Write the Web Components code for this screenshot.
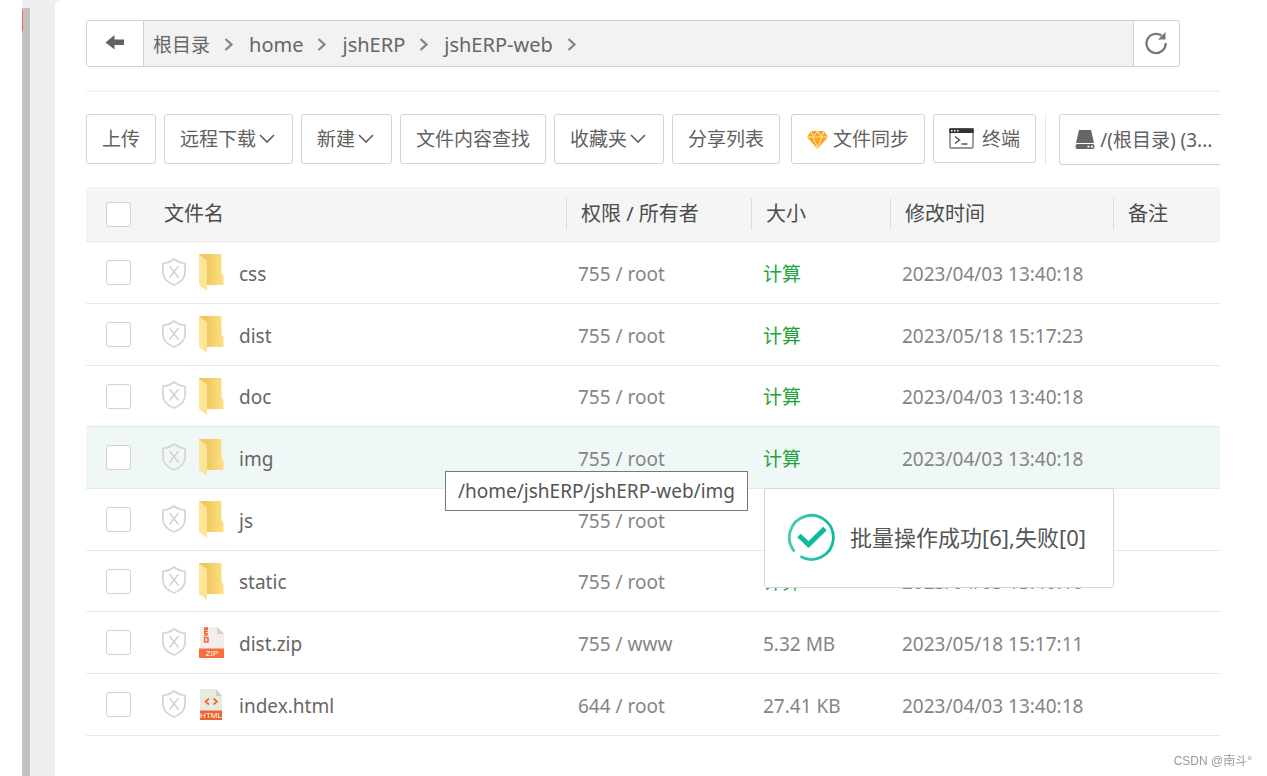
<!DOCTYPE html>
<html lang="zh-CN">
<head>
<meta charset="utf-8">
<title>文件管理</title>
<style>
  html, body { margin: 0; height: 100%; }
  body {
    font-family: "Noto Sans", "Noto Sans CJK SC", sans-serif;
    font-size: 19px;
    line-height: 28px;
    color: #666;
    background: #fff;
    overflow: hidden;
  }
</style>
</head>
<body>
<app-shell>
  <path-bar path="根目录,home,jshERP,jshERP-web"></path-bar>
  <tool-bar>
    <tool-button>上传</tool-button>
    <tool-button menu>远程下载</tool-button>
    <tool-button menu>新建</tool-button>
    <tool-button>文件内容查找</tool-button>
    <tool-button menu>收藏夹</tool-button>
    <tool-button>分享列表</tool-button>
    <tool-button class="sync" icon="diamond">文件同步</tool-button>
    <tool-button icon="terminal">终端</tool-button>
    <tool-button class="disk" icon="disk">/(根目录) (3...</tool-button>
  </tool-bar>
  <file-table>
    <path-tip>/home/jshERP/jshERP-web/img</path-tip>
    <toast-message>批量操作成功[6],失败[0]</toast-message>
  </file-table>
  <page-mark slot="mark">CSDN @南斗°</page-mark>
</app-shell>

<script>
const ICONS = {
  back: `<svg width="20" height="18" viewBox="0 0 20 18"><path fill="#626262" d="M.500 7.500 9.500 0V4.500H19v5.500H9.500V14.500z"/></svg>`,
  next: `<svg width="10" height="14" viewBox="0 0 10 14"><path fill="none" stroke="#858585" stroke-width="2.300" d="M1.500 1 7.500 6.500l-6 5.500"/></svg>`,
  refresh: `<svg width="24" height="24" viewBox="0 0 24 24"><path fill="none" stroke="#777" stroke-width="2.300" d="M20.700 11A9.600 9.600 0 1 1 16.500 3.500"/><path fill="#777" d="M20.500 0V7.500h-7.500z"/></svg>`,
  down: `<svg width="21" height="14" viewBox="0 0 21 14"><path fill="none" stroke="#606060" stroke-width="1.600" d="M4 3 11 10 18 3"/></svg>`,
  diamond: `<svg width="21" height="19" viewBox="0 0 21 19"><path fill="#fba41c" d="M4 1h13l4 6-10.500 12L0 7z"/><path fill="none" stroke="#fff1d4" stroke-width=".900" d="M0 7h21M6 7l4.500 11L15 7M4 1l2.500 6L10.500 1 14.500 7 17 1"/></svg>`,
  terminal: `<svg width="25" height="21" viewBox="0 0 25 21"><rect x="1" y="1" width="23" height="19" rx="1" fill="#fff" stroke="#777" stroke-width="1.400"/><path fill="#333" d="M.300.300h24.400V5H.300z"/><path fill="#fff" d="M2 2h1.500v1.500H2zM5 2h1.500v1.500H5zM8 2h1.500v1.500H8z"/><path fill="none" stroke="#555" stroke-width="1.500" d="M6 8.500l4.500 3.500L6 15.500M12.500 16h6"/></svg>`,
  disk: `<svg width="20" height="19" viewBox="0 0 20 19"><path fill="#666" d="M4 0h12l3 13H1zM2 14h16q1.500 0 1.500 2.500T18 19H2Q.500 19 .500 16.500T2 14z"/><path fill="#fff" d="M12.500 15.800h2v1.600h-2zM16 15.800h2v1.600h-2z"/></svg>`,
  shield: `<svg width="25" height="28" viewBox="0 0 25 28"><path fill="none" stroke="#d6d6d6" stroke-width="1.800" stroke-linejoin="round" d="M12 1C9 3.500 5 5 .900 5.300V14c0 6 4.600 10.500 11.100 13 6.500-2.500 11.100-7 11.100-13V5.300C19 5 15 3.500 12 1z"/><path stroke="#d0d0d0" stroke-width="1.400" d="M7.500 8 16.500 19.500M16.500 8 7.500 19.500"/></svg>`,
  folder: `<svg width="25" height="37" viewBox="0 0 25 37"><defs><linearGradient id="b"><stop offset=".3" stop-color="#efc95f"/><stop offset="1" stop-color="#fddf83"/></linearGradient><linearGradient id="f"><stop stop-color="#ffe69b"/><stop offset="1" stop-color="#fde395"/></linearGradient></defs><path fill="url(#b)" d="M0 0h22.500v19l2 2.500V31H6L0 20z"/><path fill="url(#f)" d="M0 .500 7 5.500q1 .800 1 2V37L0 31z"/></svg>`,
  zip: `<svg width="25" height="31" viewBox="0 0 25 31"><path fill="#f2eeec" d="M1 0h17l7 7v15H1z"/><path fill="#d5d2c8" d="M18 0v7h7z"/><path fill="none" stroke="#f0683c" stroke-width="1.500" d="M5 1h4M5 3l4-1M5 4.500h4M5 6l4 1.500M5 8.500l4-1"/><path fill="none" stroke="#f0683c" stroke-width="1.500" d="M5.500 10.500h3.500v4.500H5.500z"/><path fill="#f5703c" d="M0 21.500h25V31H0z"/><text x="13" y="29" text-anchor="middle" font-family="Liberation Sans, sans-serif" font-size="8" fill="#fff">ZIP</text></svg>`,
  html: `<svg width="25" height="31" viewBox="0 0 25 31"><path fill="#e8e9df" d="M1 0h16l6 7v15H1z"/><path fill="#d0d0c2" d="M17 0v7h6z"/><path fill="none" stroke="#f0683c" stroke-width="1.700" d="M10 9.500 6.500 12.500 10 15.500M14.500 9.500 18 12.500 14.500 15.500"/><path fill="#ee642f" d="M1 21.500h22V31H1z"/><text x="12" y="29" text-anchor="middle" font-family="Liberation Sans, sans-serif" font-size="8" fill="#fff">HTML</text></svg>`,
  success: `<svg width="48" height="48" viewBox="0 0 48 48"><defs><linearGradient id="r" x1="0" x2="1"><stop stop-color="#45c9b5"/><stop offset="1" stop-color="#10b99e"/></linearGradient></defs><path fill="none" stroke="url(#r)" stroke-width="2.800" d="M6.500 38.500A22 22 0 1 1 12.500 43.500"/><path fill="none" stroke="#0dba9f" stroke-width="5" d="M11 22.500 20.500 31.500 37 15.500"/></svg>`
};

function define(name, css, html) {
  const template = document.createElement('template');
  customElements.define(name, class extends HTMLElement {
    connectedCallback() {
      if (this.shadowRoot) return;
      template.innerHTML = `<style>*{box-sizing:border-box}svg{display:block;flex:none}${css}</style>` +
        (typeof html === 'function' ? html(this) : html);
      this.attachShadow({ mode: 'open' }).append(template.content.cloneNode(true));
    }
  });
}

define('app-shell', `
  :host { display: flex; min-height: 100vh; padding-left: 22px; box-sizing: border-box; }
  .track { flex: none; width: 33px; display: flex; background: #efefef; padding-top: 8px; }
  .thumb { width: 8px; background: #c1c1c1; }
  .thumb::before { content: ""; display: block; width: 1px; height: 20px; margin-top: 3px; background: #ff6a26; }
  .back { flex: 1; min-width: 0; background: #efefef; display: flex; }
  main { flex: 1; min-width: 0; padding: 20px 47px 24px 31px; background: #fff; border-top-left-radius: 6px; }
`, `<div class="track"><div class="thumb"></div></div>
    <div class="back"><main><slot></slot></main></div><slot name="mark"></slot>`);

define('path-bar', `
  :host { display: block; padding-bottom: 23px; border-bottom: 2px solid #f5f5f5; }
  nav { display: flex; height: 47px; margin-right: 40px; border: 1px solid #d0d0d0; border-radius: 3px; background: #f2f2f2; overflow: hidden; }
  button { flex: none; display: grid; place-items: center; padding: 0; border: 0; background: #fff; }
  .back { width: 57px; border-right: 1px solid #d0d0d0; }
  .reload { width: 46px; border-left: 1px solid #d0d0d0; }
  ol { flex: 1; display: flex; align-items: center; margin: 0; padding: 2px 0 0 9px; list-style: none; }
  li { display: flex; align-items: center; gap: 14px; margin-right: 15px; }
  a { color: #666; text-decoration: none; font-size: 20px; }
  li:first-child a { font-size: 19px; }
`, host => `<nav aria-label="路径">
    <button class="back" aria-label="返回">${ICONS.back}</button>
    <ol>${host.getAttribute('path').split(',').map(p => `<li><a href="#">${p}</a>${ICONS.next}</li>`).join('')}</ol>
    <button class="reload" aria-label="刷新">${ICONS.refresh}</button></nav>`);

define('tool-bar', `
  :host { display: flex; align-items: flex-start; gap: 8px; padding: 22px 0; overflow: hidden; }
  ::slotted(.sync) { margin-left: 3px; }
  ::slotted(.disk) { margin-left: 1px; padding-left: 13px; border-left: 1px solid #e8e8e8; }
`, `<slot></slot>`);

define('tool-button', `
  :host { display: block; flex: none; }
  button { display: flex; align-items: center; height: 50px; padding: 0 15px; border: 1px solid #d3d3d3; border-radius: 3px; background: #fff; color: #606060; font: inherit; white-space: nowrap; }
  .diamond, .disk { gap: 5px; }
  .disk { height: 51px; }
  .terminal { gap: 8px; height: 49px; }
`, host => {
  const icon = host.getAttribute('icon');
  return `<button class="${icon || ''}">${icon ? ICONS[icon] : ''}<slot></slot>${host.hasAttribute('menu') ? ICONS.down : ''}</button>`;
});

define('file-icon', `:host { display: block; flex: none; }`, host => ICONS[host.getAttribute('type')]);

const FILES = [
  ['folder', 'css', '755 / root', '', '2023/04/03 13:40:18'],
  ['folder', 'dist', '755 / root', '', '2023/05/18 15:17:23'],
  ['folder', 'doc', '755 / root', '', '2023/04/03 13:40:18'],
  ['folder', 'img', '755 / root', '', '2023/04/03 13:40:18'],
  ['folder', 'js', '755 / root', ' ', ''],
  ['folder', 'static', '755 / root', '', '2023/04/03 13:40:18'],
  ['zip', 'dist.zip', '755 / www', '5.32 MB', '2023/05/18 15:17:11'],
  ['html', 'index.html', '644 / root', '27.41 KB', '2023/04/03 13:40:18']
];

define('file-table', `
  :host { display: block; position: relative; }
  table { width: 100%; table-layout: fixed; border-collapse: separate; border-spacing: 0; }
  th { height: 55px; padding: 0; background: #f5f5f5; border-bottom: 1px solid #ebebeb; text-align: left; font-weight: 400; font-size: 20px; color: #4c4c4c; }
  th span { display: block; padding-left: 14px; line-height: 32px; }
  th + th + th span { border-left: 1px solid #dcdcdc; }
  td { height: 62px; padding: 2px 0 0 12px; border-bottom: 1px solid #e8e8e8; color: #858585; white-space: nowrap; }
  tr:nth-child(3n) td { height: 61px; }
  .check { width: 64px; padding: 0 0 0 20px; }
  .perm { width: 185px; } .size { width: 139px; } .time { width: 223px; } .note { width: 107px; }
  input { display: block; appearance: none; width: 25px; height: 25px; margin: 0; border: 1px solid #d2d2d2; border-radius: 3px; background: #fff; }
  .name { display: flex; align-items: center; gap: 12px; height: 40px; }
  .name a { margin-left: 3px; color: #666; text-decoration: none; }
  file-icon { margin-bottom: 2px; }
  file-icon[type="shield"] { margin-bottom: 4px; }
  .calc { color: #20a53a; text-decoration: none; }
  .active td { background: #eff8f7; border-bottom-color: #dceeeb; }
`, `<table>
  <thead><tr><th class="check"><input type="checkbox" aria-label="全选"></th><th><span>文件名</span></th>
  <th class="perm"><span>权限 / 所有者</span></th><th class="size"><span>大小</span></th>
  <th class="time"><span>修改时间</span></th><th class="note"><span>备注</span></th></tr></thead>
  <tbody>${FILES.map(([type, name, perm, size, time]) => `<tr class="${name === 'img' ? 'active' : ''}">
    <td class="check"><input type="checkbox" aria-label="${name}"></td>
    <td><div class="name"><file-icon type="shield"></file-icon><file-icon type="${type}"></file-icon><a href="#">${name}</a></div></td>
    <td>${perm}</td><td>${size || '<a class="calc" href="#">计算</a>'}</td><td>${time}</td><td></td></tr>`).join('')}</tbody>
  </table><slot></slot>`);

define('path-tip', `
  :host { display: block; position: absolute; left: 359px; top: 284px; box-sizing: border-box; height: 40px; padding: 0 12px; border: 1px solid #777; background: #fff; color: #555; line-height: 38px; white-space: nowrap; }
`, `<slot></slot>`);

define('toast-message', `
  :host { display: flex; position: absolute; left: 678px; top: 301px; align-items: center; gap: 14px; box-sizing: border-box; width: 350px; height: 100px; padding: 0 23px 3px; border: 1px solid #d6d6d6; border-radius: 3px; background: #fff; color: #555; font-size: 22px; line-height: 32px; white-space: nowrap; }
`, `${ICONS.success}<slot></slot>`);

define('page-mark', `
  :host { display: block; position: fixed; right: 15px; bottom: 5px; font-size: 12px; line-height: 20px; color: #999; font-family: "Liberation Sans", "Noto Sans CJK SC", sans-serif; }
`, `<slot></slot>`);
</script>
</body>
</html>
